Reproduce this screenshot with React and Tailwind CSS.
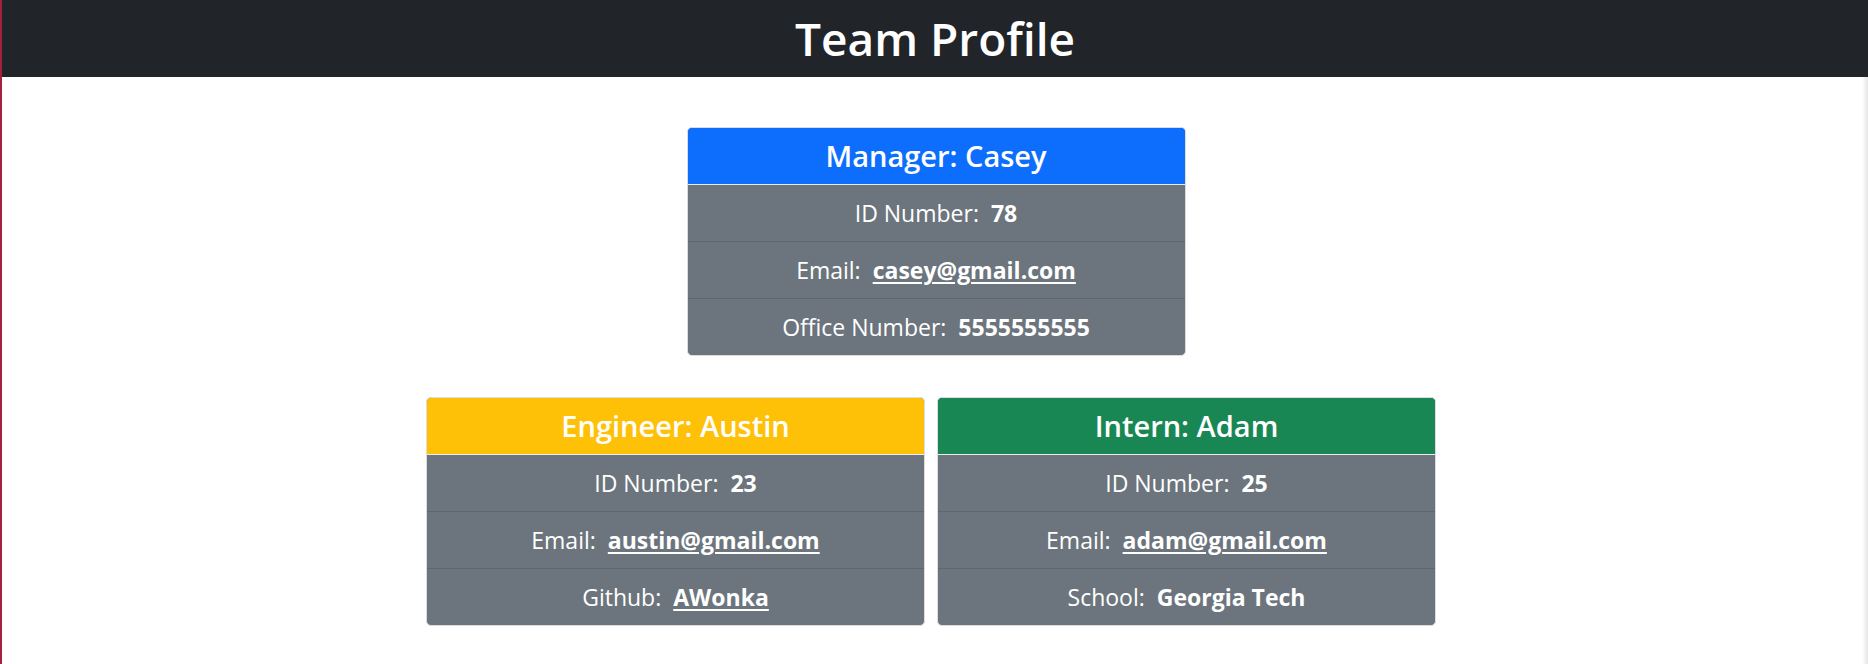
const team = {
  manager: {
    role: 'Manager', name: 'Casey', head: 'bg-[#0d6efd]',
    rows: [
      { label: 'ID Number:', value: '78' },
      { label: 'Email:', value: 'casey@gmail.com', link: true },
      { label: 'Office Number:', value: '5555555555' },
    ],
  },
  others: [
    {
      role: 'Engineer', name: 'Austin', head: 'bg-[#ffc107]',
      rows: [
        { label: 'ID Number:', value: '23' },
        { label: 'Email:', value: 'austin@gmail.com', link: true },
        { label: 'Github:', value: 'AWonka', link: true },
      ],
    },
    {
      role: 'Intern', name: 'Adam', head: 'bg-[#198754]',
      rows: [
        { label: 'ID Number:', value: '25' },
        { label: 'Email:', value: 'adam@gmail.com', link: true },
        { label: 'School:', value: 'Georgia Tech' },
      ],
    },
  ],
}

function Card({ member }) {
  return (
    <div className="w-[499px] border border-[#dcdcdc] rounded-[5px] overflow-hidden bg-[#6c757d]">
      <div className={`${member.head} h-[57px] border-b border-[#e9ecef] flex items-center justify-center text-white text-[29px] font-semibold`}>
        {member.role}: {member.name}
      </div>
      {member.rows.map((r, i) => (
        <div key={r.label}
          className={`flex items-center justify-center text-white text-[23px] ${i === 0 ? 'h-[56px]' : 'h-[57px] border-t border-[#5f666d]'}`}>
          <span className="mr-[12px]">{r.label}</span>
          {r.link
            ? <a href="#" className="font-bold underline underline-offset-[3px] decoration-[2px]">{r.value}</a>
            : <strong className="font-bold">{r.value}</strong>}
        </div>
      ))}
    </div>
  )
}

export default function App() {
  return (
    <div className="min-h-[664px] bg-white flex font-['Open_Sans','Noto_Sans',sans-serif]">
      <div className="w-[2px] bg-[#a3213f] shrink-0" />
      <div className="flex-1 flex flex-col">
        <header className="h-[77px] bg-[#212529] flex items-center justify-center text-white text-[46px] font-semibold">
          Team Profile
        </header>
        <div className="flex flex-1">
          <main className="flex-1 flex flex-col items-center pt-[50px]">
            <div className="ml-[8px]">
              <Card member={team.manager} />
            </div>
            <div className="flex gap-[12px] mt-[41px] mr-[2px]">
              {team.others.map(m => <Card key={m.role} member={m} />)}
            </div>
          </main>
          <div className="w-[6px] bg-gradient-to-r from-white to-[#e6e6e6]" />
        </div>
      </div>
    </div>
  )
}
